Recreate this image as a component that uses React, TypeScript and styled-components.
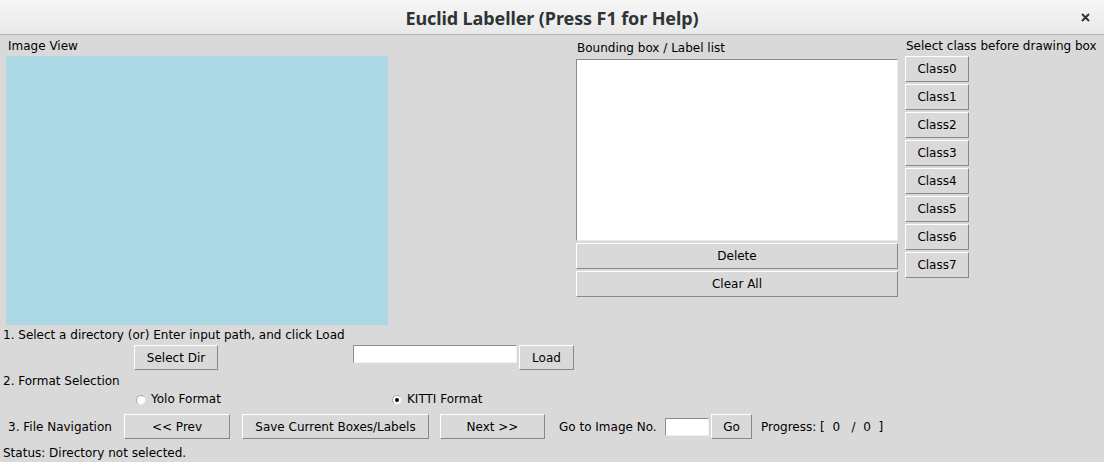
import React from "react";
import styled, { createGlobalStyle } from "styled-components";

const Global = createGlobalStyle`
  html, body { margin: 0; padding: 0; background: #d9d9d9; }
  * { box-sizing: border-box; }
`;

const Window = styled.div`
  width: 1104px;
  height: 462px;
  overflow: hidden;
  display: flex;
  flex-direction: column;
  background: #d9d9d9;
  font-family: "DejaVu Sans", sans-serif;
  font-size: 12px;
  color: #000;
`;

const TitleBar = styled.div`
  height: 35px;
  flex: none;
  display: flex;
  align-items: center;
  justify-content: center;
  position: relative;
  background: linear-gradient(#f6f6f6, #e9e9e9);
  border-bottom: 1px solid #b8b8b8;
`;

const TitleText = styled.div`
  font-family: "Noto Sans", sans-serif;
  font-weight: 700;
  font-size: 18px;
  color: #2e3436;
  letter-spacing: -0.1px;
  margin-top: 1px;
`;

const CloseBtn = styled.div`
  position: absolute;
  right: 14px;
  top: 13px;
  width: 9px;
  height: 9px;
  display: flex;
`;

const Top = styled.div`
  display: flex;
  height: 291px;
  flex: none;
`;

const LeftPane = styled.div`
  margin-left: 6px;
  width: 382px;
  padding-top: 2px;
  display: flex;
  flex-direction: column;
`;

const Label = styled.div<{ $pl?: number; $w?: number; $ml?: number }>`
  line-height: 16px;
  height: 16px;
  white-space: pre;
  padding-left: ${(p) => p.$pl ?? 0}px;
  margin-left: ${(p) => p.$ml ?? 0}px;
  ${(p) => (p.$w ? `width: ${p.$w}px; flex: none;` : "")}
`;

const Caption = styled.div<{ $pl?: number }>`
  line-height: 18px;
  height: 16px;
  white-space: pre;
  padding-left: ${(p) => p.$pl ?? 0}px;
`;

const Canvas = styled.div`
  margin-top: 3px;
  width: 382px;
  height: 269px;
  background: #add8e6;
`;

const MiddlePane = styled.div`
  margin-left: 188px;
  width: 322px;
  padding-top: 4px;
  display: flex;
  flex-direction: column;
`;

const ListBox = styled.div`
  margin-top: 4px;
  height: 182px;
  background: #fff;
  border-top: 1px solid #8c8c8c;
  border-left: 1px solid #8c8c8c;
  border-right: 1px solid #ececec;
  border-bottom: 1px solid #ececec;
`;

const Button = styled.button<{ $w?: number; $h?: number; $mt?: number; $ml?: number }>`
  flex: none;
  width: ${(p) => (p.$w ? `${p.$w}px` : "100%")};
  height: ${(p) => p.$h ?? 26}px;
  margin-top: ${(p) => p.$mt ?? 0}px;
  margin-left: ${(p) => p.$ml ?? 0}px;
  padding: 0;
  background: #d9d9d9;
  font-family: "DejaVu Sans", sans-serif;
  font-size: 12px;
  color: #000;
  border-top: 1px solid #ffffff;
  border-left: 1px solid #ffffff;
  border-right: 1px solid #888888;
  border-bottom: 1px solid #888888;
  border-radius: 0;
  cursor: default;
`;

const RightPane = styled.div`
  margin-left: 7px;
  padding-top: 2px;
  display: flex;
  flex-direction: column;
`;

const ClassList = styled.div`
  margin-top: 3px;
  display: flex;
  flex-direction: column;
  gap: 2px;
`;

const Row = styled.div<{ $h: number; $mt?: number; $pl?: number; $align?: string }>`
  display: flex;
  align-items: ${(p) => p.$align ?? "center"};
  height: ${(p) => p.$h}px;
  margin-top: ${(p) => p.$mt ?? 0}px;
  padding-left: ${(p) => p.$pl ?? 0}px;
  flex: none;
`;

const Entry = styled.div<{ $w: number; $h: number; $ml?: number; $mt?: number }>`
  flex: none;
  align-self: flex-start;
  width: ${(p) => p.$w}px;
  height: ${(p) => p.$h}px;
  margin-left: ${(p) => p.$ml ?? 0}px;
  margin-top: ${(p) => p.$mt ?? 0}px;
  background: #fff;
  border-top: 1px solid #8c8c8c;
  border-left: 1px solid #8c8c8c;
  border-right: 1px solid #f0f0f0;
  border-bottom: 1px solid #f0f0f0;
`;

const RadioItem = styled.label<{ $w: number }>`
  display: flex;
  align-items: center;
  gap: 5px;
  width: ${(p) => p.$w}px;
  flex: none;
  height: 16px;
  line-height: 18px;
`;

const Indicator = styled.span<{ $on?: boolean }>`
  width: 10px;
  height: 10px;
  margin-top: 2px;
  border-radius: 50%;
  background: #fdfdfd;
  border: 1px solid #a8a8a8;
  border-right-color: #e0e0e0;
  border-bottom-color: #e0e0e0;
  display: flex;
  align-items: center;
  justify-content: center;
  &::after {
    content: "";
    width: 4px;
    height: 4px;
    border-radius: 50%;
    background: ${(p) => (p.$on ? "#000" : "transparent")};
  }
`;

const classes = ["Class0", "Class1", "Class2", "Class3", "Class4", "Class5", "Class6", "Class7"];

export default function App() {
  return (
    <>
      <Global />
      <Window>
        <TitleBar>
          <TitleText>Euclid Labeller (Press F1 for Help)</TitleText>
          <CloseBtn>
            <svg width="9" height="9" viewBox="0 0 9 9">
              <path d="M1 1 L8 8 M8 1 L1 8" stroke="#2e3436" strokeWidth="1.9" />
            </svg>
          </CloseBtn>
        </TitleBar>
        <Top>
          <LeftPane>
            <Caption $pl={2}>Image View</Caption>
            <Canvas />
          </LeftPane>
          <MiddlePane>
            <Caption $pl={1}>Bounding box / Label list</Caption>
            <ListBox />
            <Button $mt={2}>Delete</Button>
            <Button $mt={2}>Clear All</Button>
          </MiddlePane>
          <RightPane>
            <Caption $pl={1}>Select class before drawing box</Caption>
            <ClassList>
              {classes.map((c) => (
                <Button key={c} $w={64}>
                  {c}
                </Button>
              ))}
            </ClassList>
          </RightPane>
        </Top>
        <Row $h={16} $pl={3}>
          <Caption>1. Select a directory (or) Enter input path, and click Load</Caption>
        </Row>
        <Row $h={25} $mt={3} $align="flex-start">
          <Button $w={84} $h={25} $ml={134}>Select Dir</Button>
          <Entry $w={164} $h={18} $ml={135} />
          <Button $w={55} $h={25} $ml={2}>Load</Button>
        </Row>
        <Row $h={16} $mt={2} $pl={3}>
          <Caption>2. Format Selection</Caption>
        </Row>
        <Row $h={16} $mt={3} $pl={136}>
          <RadioItem $w={256}>
            <Indicator />
            Yolo Format
          </RadioItem>
          <RadioItem $w={200}>
            <Indicator $on />
            KITTI Format
          </RadioItem>
        </Row>
        <Row $h={25} $mt={7} $pl={8}>
          <Label $w={116}>3. File Navigation</Label>
          <Button $w={106} $h={25}>&lt;&lt; Prev</Button>
          <Button $w={187} $h={25} $ml={12}>Save Current Boxes/Labels</Button>
          <Button $w={105} $h={25} $ml={11}>Next &gt;&gt;</Button>
          <Label $w={106} $ml={14}>Go to Image No.</Label>
          <Entry $w={44} $h={18} $mt={4} />
          <Button $w={41} $h={25} $ml={2}>Go</Button>
          <Label $ml={9}>Progress: [  0   /  0  ]</Label>
        </Row>
        <Row $h={16} $mt={5} $pl={3}>
          <Caption>Status: Directory not selected.</Caption>
        </Row>
      </Window>
    </>
  );
}
